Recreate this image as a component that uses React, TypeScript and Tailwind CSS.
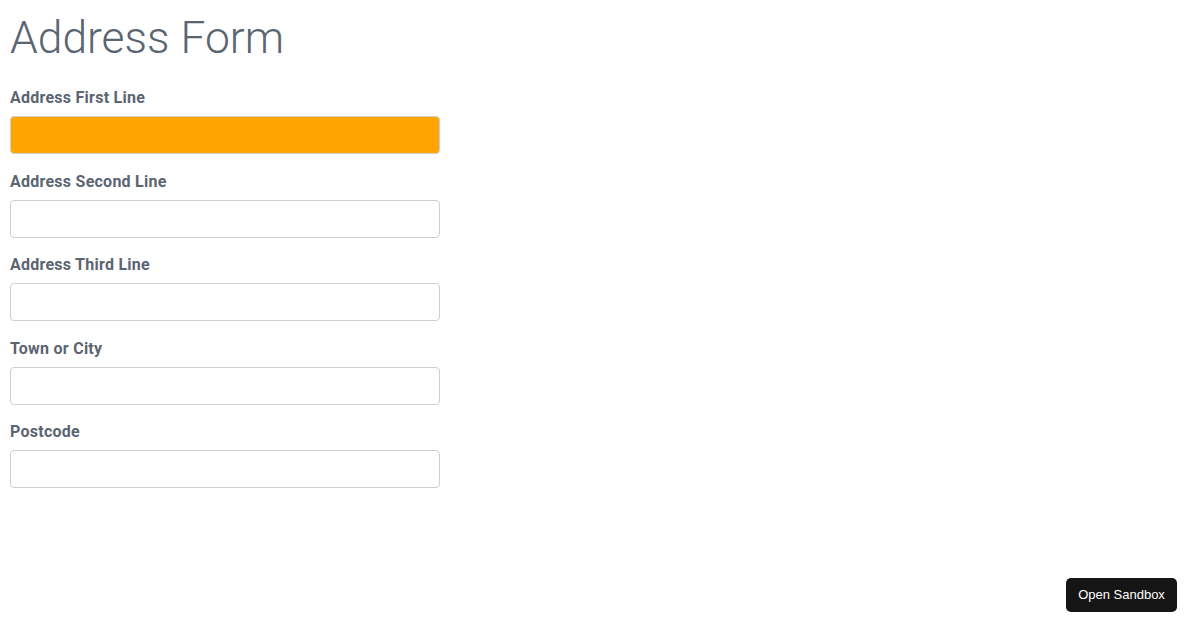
export default function App() {
  const fields = [
    { label: "Address First Line", highlight: true },
    { label: "Address Second Line" },
    { label: "Address Third Line" },
    { label: "Town or City" },
    { label: "Postcode" },
  ];
  return (
    <div
      className="relative w-[1200px] h-[630px] bg-white overflow-hidden"
      style={{ fontFamily: "Roboto, 'Liberation Sans', sans-serif" }}
    >
      <div className="pl-[10px] w-[440px]">
        <h1 className="text-[44.4px] font-light leading-[56px] text-[#5b6572] pt-[10px]">
          Address Form
        </h1>
        <div className="flex flex-col gap-[16.5px] mt-[21px]">
          {fields.map((f) => (
            <div key={f.label} className="flex flex-col">
              <label className="text-[16px] font-bold leading-[20px] tracking-[0.25px] text-[#5b6572] pt-[1px] mb-[8px]">
                {f.label}
              </label>
              <input
                type="text"
                className={
                  "h-[38px] w-[430px] rounded-[4px] border border-[#cfcfcf] outline-none " +
                  (f.highlight ? "bg-[#ffa500]" : "bg-white")
                }
              />
            </div>
          ))}
        </div>
      </div>
      <div
        className="absolute right-[23px] bottom-[18px] h-[34px] w-[111px] rounded-[5px] bg-[#151515] text-white text-[13px] flex items-center justify-center"
        style={{ fontFamily: "'Liberation Sans', Arial, sans-serif" }}
      >
        Open Sandbox
      </div>
    </div>
  );
}
